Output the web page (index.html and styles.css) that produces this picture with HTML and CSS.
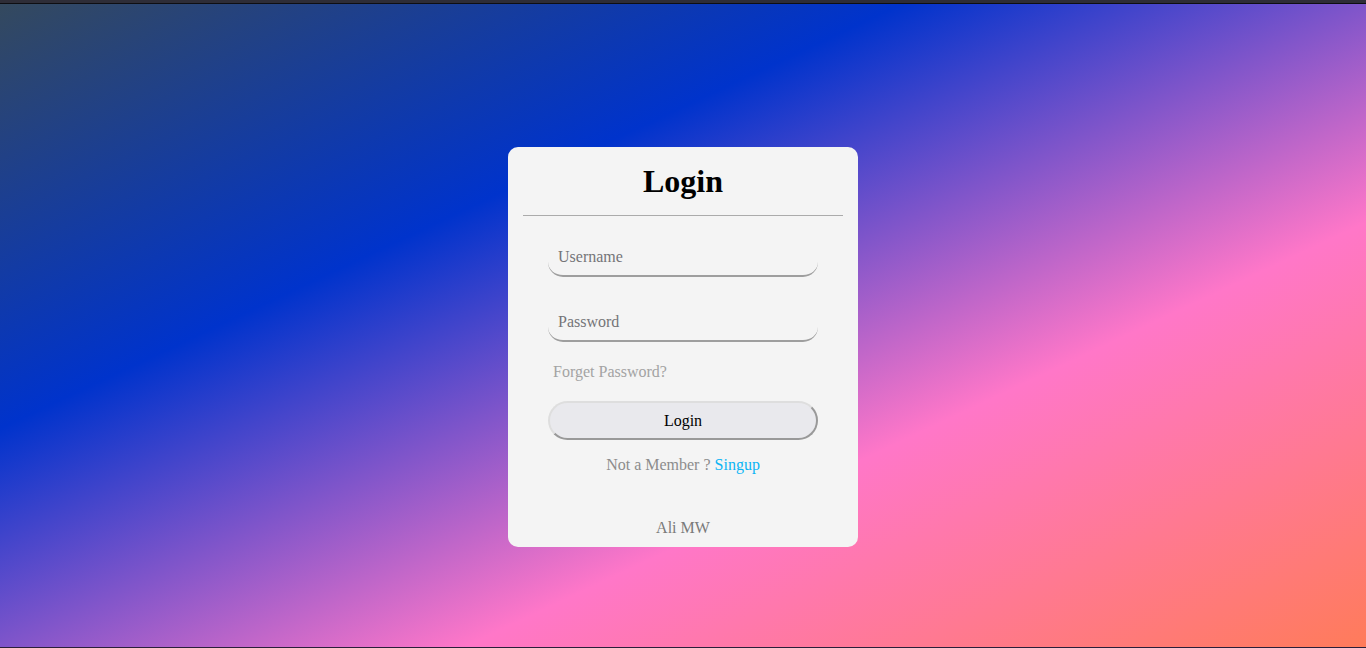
FILE: index.html
```html
<!DOCTYPE html>
<html lang="en">
<head>
<meta charset="utf-8">
<title>Login</title>
<link rel="stylesheet" href="styles.css">
</head>
<body>
<div class="topbar"></div>
<main class="stage">
  <form class="card">
    <h1 class="title">Login</h1>
    <div class="fields">
      <input class="field" type="text" placeholder="Username">
      <input class="field field-gap" type="password" placeholder="Password">
    </div>
    <a class="forget" href="#">Forget Password?</a>
    <button class="btn" type="button">Login</button>
    <p class="member">Not a Member ? <a class="signup" href="#">Singup</a></p>
    <p class="author">Ali MW</p>
  </form>
</main>
<div class="bottombar"></div>
</body>
</html>
```
FILE: styles.css
```css
html, body {
  margin: 0;
  padding: 0;
  height: 100%;
}
body {
  font-family: "Liberation Serif", "Times New Roman", serif;
  background: #1d1a26;
  display: flex;
  flex-direction: column;
  overflow: hidden;
}
.topbar {
  height: 3px;
  background: #2e2d37;
  border-bottom: 1px solid #0e0e12;
  flex: none;
}
.stage {
  flex: 1;
  background: linear-gradient(to bottom right, #34495e 0%, #0033cc 33%, #ff77c8 67%, #ff7b5a 100%);
  display: flex;
  justify-content: center;
  align-items: flex-start;
  padding-top: 143px;
}
.bottombar {
  height: 1px;
  flex: none;
  background: #2b1f3a;
}
.card {
  width: 350px;
  height: 400px;
  box-sizing: border-box;
  background: #f4f4f4;
  border-radius: 10px;
  padding-top: 16px;
  display: flex;
  flex-direction: column;
}
.title {
  margin: 0 15px;
  padding: 0 0 15px;
  font-size: 32px;
  line-height: 37px;
  font-weight: bold;
  text-align: center;
  color: #000;
  border-bottom: 1px solid #ababab;
}
.fields {
  display: flex;
  flex-direction: column;
  padding: 23px 40px 0;
}
.field {
  height: 38px;
  box-sizing: border-box;
  border: none;
  border-bottom: 2px solid #9e9e9e;
  border-radius: 0 0 15px 15px;
  background: transparent;
  padding: 0 10px;
  font-family: "Liberation Serif", "Times New Roman", serif;
  font-size: 16px;
  color: #333;
  outline: none;
}
.field::placeholder {
  color: #747478;
}
.field-gap {
  margin-top: 27px;
}
.forget {
  margin: 21px 0 0 45px;
  font-size: 16px;
  line-height: 18px;
  color: #a3a3a3;
  text-decoration: none;
  align-self: flex-start;
}
.btn {
  margin: 20px 40px 0;
  height: 39px;
  border: 2px solid;
  border-color: #dedede #999 #999 #dedede;
  border-radius: 20px;
  background: #e9e9ed;
  font-family: "Liberation Serif", "Times New Roman", serif;
  font-size: 16px;
  color: #000;
}
.member {
  margin: 16px 0 0;
  text-align: center;
  font-size: 16px;
  line-height: 18px;
  color: #8c8c8c;
}
.signup {
  color: #0ab4f5;
  text-decoration: none;
}
.author {
  margin: auto 0 10px;
  text-align: center;
  font-size: 16px;
  line-height: 18px;
  color: #7a7a7a;
}
```
